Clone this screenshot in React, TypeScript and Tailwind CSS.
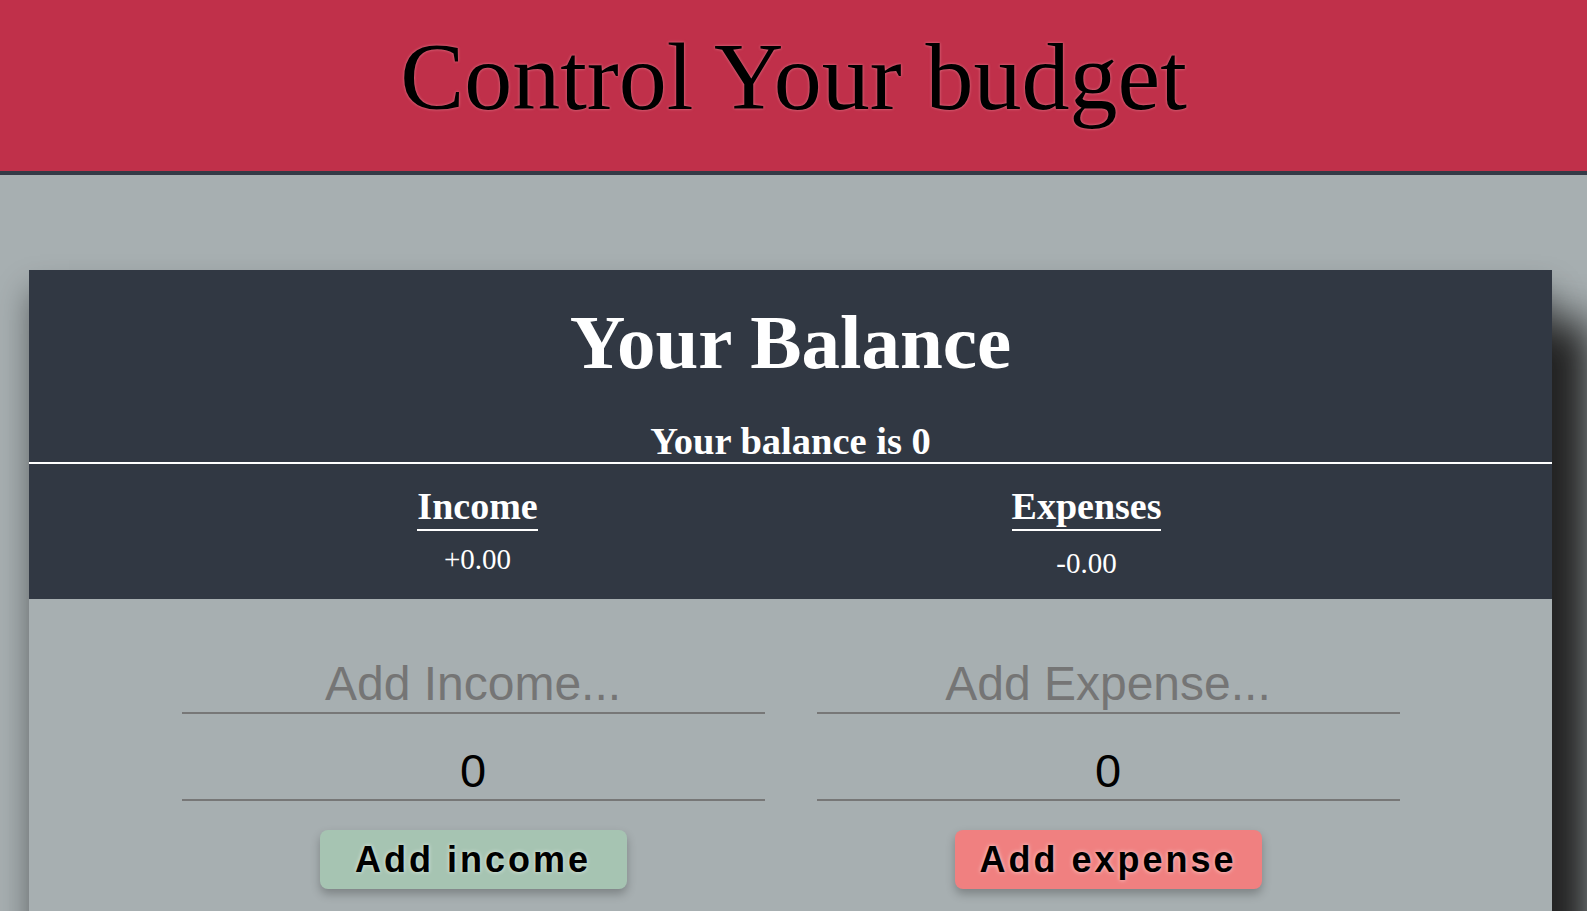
import React from 'react';

const serif = "font-['Liberation_Serif','Times_New_Roman',serif]";
const sans = "font-['Liberation_Sans',Arial,sans-serif]";

const BudgetColumn: React.FC<{ placeholder: string; label: string; tone: string }> = ({ placeholder, label, tone }) => {
  return (
    <div className="w-[583px] flex flex-col items-center">
      <input
        type="text"
        placeholder={placeholder}
        className={`${sans} w-full h-[58px] border-b-2 border-[#777] bg-transparent text-center text-[48px] text-black outline-none placeholder:text-[#757575]`}
      />
      <input
        type="number"
        defaultValue={0}
        className={`${sans} mt-[29px] w-full h-[58px] border-b-2 border-[#777] bg-transparent text-center text-[47px] text-black outline-none [appearance:textfield] [&::-webkit-inner-spin-button]:appearance-none`}
      />
      <button
        className={`${sans} mt-[29px] w-[307px] h-[59px] rounded-lg ${tone} flex items-center justify-center text-[36px] font-bold tracking-[3px] text-black shadow-[0_5px_10px_rgba(0,0,0,0.25)] [text-shadow:0_0_4px_rgba(255,255,255,0.7)]`}
      >
        {label}
      </button>
    </div>
  );
};

const App: React.FC = () => {
  return (
    <div className="min-h-screen w-full bg-[#a7afb1] overflow-hidden">
      {/* Header */}
      <header className="h-[175px] bg-[#c0304a] border-b-4 border-[#343a46] flex justify-center pt-[24px]">
        <h1 className={`${serif} text-[96px] font-normal leading-[106px] text-black [text-shadow:0_0_3px_rgba(255,190,200,0.55)]`}>
          Control Your budget
        </h1>
      </header>

      {/* Card */}
      <main className="pt-[95px] pl-[29px]">
        <div className="w-[1523px] bg-[#a7afb1] [box-shadow:40px_50px_40px_#222,0_20px_30px_rgba(0,0,0,0.4)]">
          <section className="bg-[#313843] text-white">
            <div className="border-b-2 border-white pt-[31px] flex flex-col items-center">
              <h2 className={`${serif} text-[77px] font-bold leading-[83px]`}>Your Balance</h2>
              <h3 className={`${serif} mt-[36px] text-[38.5px] font-bold leading-[42px]`}>Your balance is 0</h3>
            </div>

            <div className="grid grid-cols-[609px_609px] pl-[144px] pt-[19px] pb-[20px] items-start">
              <div className="flex flex-col items-center">
                <h4 className={`${serif} inline-block text-[38px] font-bold leading-[46px] border-b-2 border-white`}>Income</h4>
                <p className={`${serif} mt-[12px] text-[29px] leading-[32px]`}>+0.00</p>
              </div>
              <div className="flex flex-col items-center">
                <h4 className={`${serif} inline-block text-[38px] font-bold leading-[46px] border-b-2 border-white`}>Expenses</h4>
                <p className={`${serif} mt-[16px] text-[29px] leading-[32px]`}>-0.00</p>
              </div>
            </div>
          </section>

          <section className="pt-[57px] pb-[40px] flex justify-center gap-[52px]">
            <BudgetColumn placeholder="Add Income..." label="Add income" tone="bg-[#a6c4b2]" />
            <BudgetColumn placeholder="Add Expense..." label="Add expense" tone="bg-[#f08080]" />
          </section>
        </div>
      </main>
    </div>
  );
};

export default App;
